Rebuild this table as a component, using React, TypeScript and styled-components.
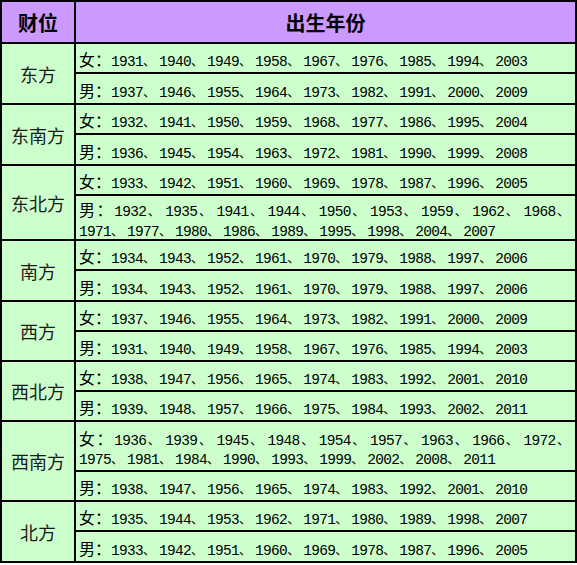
import React from "react";
import styled, { createGlobalStyle } from "styled-components";

const GlobalStyle = createGlobalStyle`
  html, body { margin: 0; padding: 0; background: #ffffff; }
  body { font-family: "Noto Sans CJK SC", "Noto Sans", sans-serif; }
`;

const Sheet = styled.div`
  display: grid;
  grid-template-columns: 72px 1fr;
  gap: 2px;
  padding: 2px;
  width: 577px;
  box-sizing: border-box;
  background: #000000;
`;

const HeadCell = styled.div`
  height: 40px;
  background: #cc99ff;
  display: flex;
  align-items: center;
  justify-content: center;
  font-family: "Noto Sans CJK SC", sans-serif;
  font-weight: 700;
  font-size: 20px;
  color: #000;
`;

const Label = styled.div`
  grid-row: span 2;
  background: #ccffcc;
  display: flex;
  align-items: center;
  justify-content: center;
  font-family: "Noto Sans CJK SC", sans-serif;
  font-size: 18px;
  color: #1a1a1a;
`;

const Data = styled.div<{ $h: number }>`
  height: ${(p) => p.$h}px;
  background: #ccffcc;
  display: flex;
  flex-direction: column;
  justify-content: center;
  padding: 4px 2px 0 3px;
  box-sizing: border-box;
  font-family: "Noto Sans CJK SC", sans-serif;
  font-size: 16px;
  line-height: 19px;
  color: #000;
  white-space: nowrap;
`;

const Line = styled.span<{ $justify: boolean }>`
  display: block;
  text-align: ${(p) => (p.$justify ? "justify" : "left")};
  text-align-last: ${(p) => (p.$justify ? "justify" : "left")};
  white-space: ${(p) => (p.$justify ? "normal" : "nowrap")};
`;

const Year = styled.span`
  font-family: "Liberation Mono", monospace;
  font-size: 14.5px;
  line-height: 1;
  letter-spacing: -0.7px;
`;

const Sep = styled.span`
  font-family: "Noto Sans CJK SC", sans-serif;
  font-size: 12.5px;
  line-height: 1;
  letter-spacing: 3.5px;
`;

type Row = { sex: string; h: number; lines: number[][] };
type Group = { dir: string; rows: [Row, Row] };

const groups: Group[] = [
  {
    dir: "东方",
    rows: [
      { sex: "女", h: 28, lines: [[1931, 1940, 1949, 1958, 1967, 1976, 1985, 1994, 2003]] },
      { sex: "男", h: 29, lines: [[1937, 1946, 1955, 1964, 1973, 1982, 1991, 2000, 2009]] },
    ],
  },
  {
    dir: "东南方",
    rows: [
      { sex: "女", h: 28, lines: [[1932, 1941, 1950, 1959, 1968, 1977, 1986, 1995, 2004]] },
      { sex: "男", h: 29, lines: [[1936, 1945, 1954, 1963, 1972, 1981, 1990, 1999, 2008]] },
    ],
  },
  {
    dir: "东北方",
    rows: [
      { sex: "女", h: 28, lines: [[1933, 1942, 1951, 1960, 1969, 1978, 1987, 1996, 2005]] },
      {
        sex: "男",
        h: 43,
        lines: [
          [1932, 1935, 1941, 1944, 1950, 1953, 1959, 1962, 1968],
          [1971, 1977, 1980, 1986, 1989, 1995, 1998, 2004, 2007],
        ],
      },
    ],
  },
  {
    dir: "南方",
    rows: [
      { sex: "女", h: 28, lines: [[1934, 1943, 1952, 1961, 1970, 1979, 1988, 1997, 2006]] },
      { sex: "男", h: 29, lines: [[1934, 1943, 1952, 1961, 1970, 1979, 1988, 1997, 2006]] },
    ],
  },
  {
    dir: "西方",
    rows: [
      { sex: "女", h: 28, lines: [[1937, 1946, 1955, 1964, 1973, 1982, 1991, 2000, 2009]] },
      { sex: "男", h: 28, lines: [[1931, 1940, 1949, 1958, 1967, 1976, 1985, 1994, 2003]] },
    ],
  },
  {
    dir: "西北方",
    rows: [
      { sex: "女", h: 28, lines: [[1938, 1947, 1956, 1965, 1974, 1983, 1992, 2001, 2010]] },
      { sex: "男", h: 28, lines: [[1939, 1948, 1957, 1966, 1975, 1984, 1993, 2002, 2011]] },
    ],
  },
  {
    dir: "西南方",
    rows: [
      {
        sex: "女",
        h: 48,
        lines: [
          [1936, 1939, 1945, 1948, 1954, 1957, 1963, 1966, 1972],
          [1975, 1981, 1984, 1990, 1993, 1999, 2002, 2008, 2011],
        ],
      },
      { sex: "男", h: 28, lines: [[1938, 1947, 1956, 1965, 1974, 1983, 1992, 2001, 2010]] },
    ],
  },
  {
    dir: "北方",
    rows: [
      { sex: "女", h: 28, lines: [[1935, 1944, 1953, 1962, 1971, 1980, 1989, 1998, 2007]] },
      { sex: "男", h: 29, lines: [[1933, 1942, 1951, 1960, 1969, 1978, 1987, 1996, 2005]] },
    ],
  },
];

function YearRow({ row }: { row: Row }) {
  const multi = row.lines.length > 1;
  return (
    <Data $h={row.h}>
      {row.lines.map((years, li) => {
        const lastLine = li === row.lines.length - 1;
        return (
          <Line key={li} $justify={multi && !lastLine}>
            {li === 0 && `${row.sex}：`}
            {years.map((y, i) => {
              const isEnd = lastLine && i === years.length - 1;
              return (
                <React.Fragment key={y + "-" + i}>
                  <Year>{y}</Year>
                  {!isEnd && <Sep>、</Sep>}
                </React.Fragment>
              );
            })}
          </Line>
        );
      })}
    </Data>
  );
}

export default function App() {
  return (
    <>
      <GlobalStyle />
      <Sheet>
        <HeadCell>财位</HeadCell>
        <HeadCell>出生年份</HeadCell>
        {groups.map((g) => (
          <React.Fragment key={g.dir}>
            <Label>{g.dir}</Label>
            <YearRow row={g.rows[0]} />
            <YearRow row={g.rows[1]} />
          </React.Fragment>
        ))}
      </Sheet>
    </>
  );
}
